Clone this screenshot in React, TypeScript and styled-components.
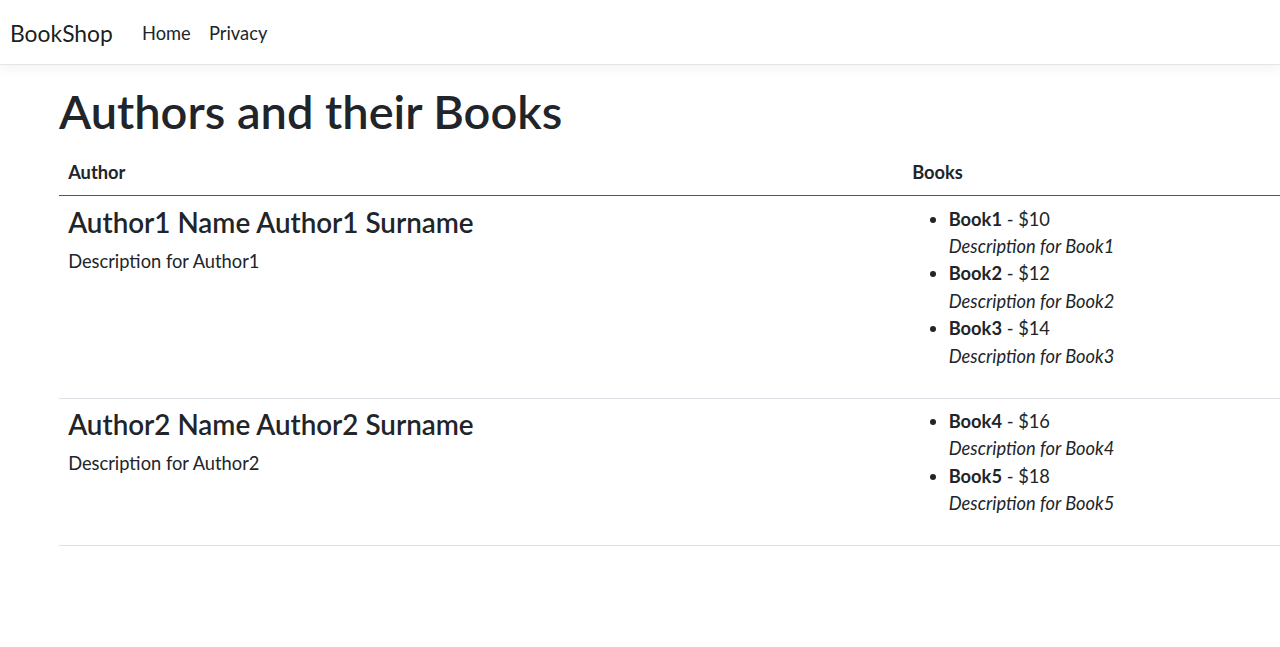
import React from "react";
import styled, { createGlobalStyle } from "styled-components";

const REM = 18.29;
const r = (n: number) => `${(n * REM).toFixed(2)}px`;

const GlobalStyle = createGlobalStyle`
  html, body { margin: 0; padding: 0; background: #fff; }
  body {
    font-family: "Segoe UI", Lato, "Noto Sans", sans-serif;
    font-size: ${r(1)};
    line-height: 1.5;
    color: #212529;
    overflow-x: hidden;
  }
  * { box-sizing: border-box; }
`;

const NavBar = styled.header`
  height: 65px;
  display: flex;
  align-items: center;
  padding: 2px 10px 0;
  border-bottom: 1px solid #e5e5e5;
  box-shadow: 0 4px 12px rgba(0, 0, 0, 0.05);
  margin-bottom: ${r(1)};
`;

const Brand = styled.a`
  font-size: ${r(1.25)};
  color: rgba(0, 0, 0, 0.9);
  text-decoration: none;
  margin-right: 20px;
  line-height: 1.5;
`;

const NavList = styled.nav`
  display: flex;
`;

const NavLink = styled.a`
  color: #212529;
  text-decoration: none;
  padding: 9px ${r(0.5)} 7px;
`;

const Main = styled.main`
  padding-left: 59px;
`;

const Title = styled.h1`
  margin: 4px 0 ${r(0.55)};
  font-size: 47px;
  font-weight: 600;
  line-height: 1.2;
`;

const Table = styled.div`
  display: grid;
  grid-template-columns: 844px 1fr;
  width: calc(100vw - 59px);
`;

const HeadCell = styled.div`
  padding: ${r(0.5)};
  font-weight: 700;
  border-bottom: 1px solid #555;
`;

const Cell = styled.div`
  padding: ${r(0.5)};
  border-bottom: 1px solid #dee2e6;
`;

const AuthorName = styled.h3`
  margin: 0 0 ${r(0.5)};
  font-size: 27.8px;
  font-weight: 600;
  line-height: 1.2;
`;

const Para = styled.p`
  margin: 0 0 ${r(1)};
`;

const BookList = styled.ul`
  margin: 0 0 ${r(1)};
  padding-left: ${r(2)};
`;

const BookItem = styled.li``;

interface Book { title: string; price: number; }
interface Author { name: string; desc: string; books: Book[]; }

const authors: Author[] = [
  {
    name: "Author1 Name Author1 Surname",
    desc: "Description for Author1",
    books: [
      { title: "Book1", price: 10 },
      { title: "Book2", price: 12 },
      { title: "Book3", price: 14 },
    ],
  },
  {
    name: "Author2 Name Author2 Surname",
    desc: "Description for Author2",
    books: [
      { title: "Book4", price: 16 },
      { title: "Book5", price: 18 },
    ],
  },
];

export default function App() {
  return (
    <>
      <GlobalStyle />
      <NavBar>
        <Brand href="#">BookShop</Brand>
        <NavList>
          <NavLink href="#">Home</NavLink>
          <NavLink href="#">Privacy</NavLink>
        </NavList>
      </NavBar>
      <Main>
        <Title>Authors and their Books</Title>
        <Table>
          <HeadCell>Author</HeadCell>
          <HeadCell>Books</HeadCell>
          {authors.map((a) => (
            <React.Fragment key={a.name}>
              <Cell>
                <AuthorName>{a.name}</AuthorName>
                <Para>{a.desc}</Para>
              </Cell>
              <Cell>
                <BookList>
                  {a.books.map((b) => (
                    <BookItem key={b.title}>
                      <strong>{b.title}</strong> - ${b.price}
                      <br />
                      <em>Description for {b.title}</em>
                    </BookItem>
                  ))}
                </BookList>
              </Cell>
            </React.Fragment>
          ))}
        </Table>
      </Main>
    </>
  );
}
